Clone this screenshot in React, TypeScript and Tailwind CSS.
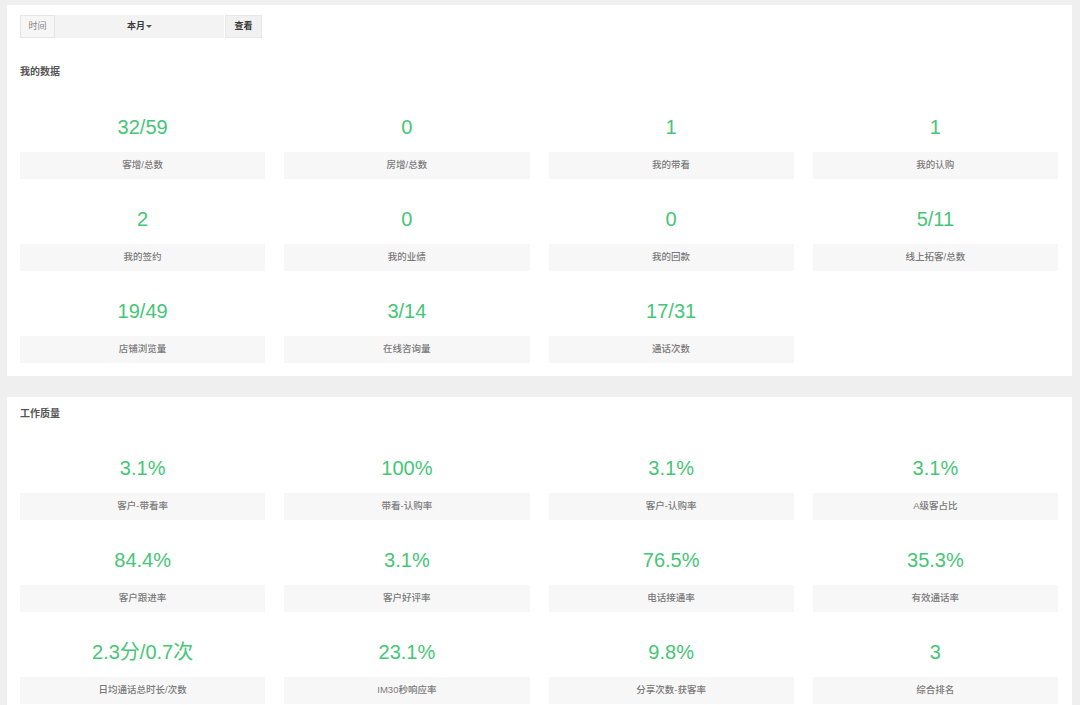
const FONT = 'font-["Liberation_Sans","Noto_Sans_CJK_SC",sans-serif]';

const MY_DATA: [string, string][] = [
  ['32/59', '客增/总数'],
  ['0', '房增/总数'],
  ['1', '我的带看'],
  ['1', '我的认购'],
  ['2', '我的签约'],
  ['0', '我的业绩'],
  ['0', '我的回款'],
  ['5/11', '线上拓客/总数'],
  ['19/49', '店铺浏览量'],
  ['3/14', '在线咨询量'],
  ['17/31', '通话次数'],
];

const QUALITY: [string, string][] = [
  ['3.1%', '客户-带看率'],
  ['100%', '带看-认购率'],
  ['3.1%', '客户-认购率'],
  ['3.1%', 'A级客占比'],
  ['84.4%', '客户跟进率'],
  ['3.1%', '客户好评率'],
  ['76.5%', '电话接通率'],
  ['35.3%', '有效通话率'],
  ['2.3分/0.7次', '日均通话总时长/次数'],
  ['23.1%', 'IM30秒响应率'],
  ['9.8%', '分享次数-获客率'],
  ['3', '综合排名'],
];

function StatGrid({ items, className }: { items: [string, string][]; className: string }) {
  return (
    <div className={`grid grid-cols-4 gap-x-[19px] gap-y-[28px] ${className}`}>
      {items.map(([value, label], i) => (
        <div key={i} className="flex flex-col">
          <div className="text-center text-[20px] leading-[24px] text-[#45c676]">{value}</div>
          <div className="mt-[13px] h-[27px] flex items-center justify-center bg-[#f7f7f7] text-[9.5px] font-medium text-[#7a7a7a]">
            {label}
          </div>
        </div>
      ))}
    </div>
  );
}

export default function App() {
  return (
    <div className={`min-h-screen bg-[#efefef] pt-[5px] pl-[7px] pr-[8px] ${FONT}`}>
      {/* 我的数据 */}
      <div className="bg-white pt-[10px] pl-[13px] pr-[14px] pb-[13px]">
        <div className="flex h-[23px] text-[9px]">
          <div className="w-[35px] flex items-center justify-center bg-[#f6f6f6] border border-[#e6e6e6] text-[#888]">
            时间
          </div>
          <div className="w-[169px] flex items-center justify-center bg-[#f3f3f3] text-[#3a3a3a] font-semibold">
            本月
            <span className="ml-[1px] inline-block w-0 h-0 border-l-[3px] border-r-[3px] border-t-[3px] border-l-transparent border-r-transparent border-t-[#555]" />
          </div>
          <div className="ml-[1px] w-[37px] flex items-center justify-center bg-[#f1f1f1] border border-[#e8e8e8] text-[#3a3a3a] font-semibold">
            查看
          </div>
        </div>
        <div className="mt-[27px] text-[10px] leading-[14px] font-semibold text-[#555]">我的数据</div>
        <StatGrid items={MY_DATA} className="mt-[36px]" />
      </div>

      {/* 工作质量 */}
      <div className="mt-[21px] bg-white pt-[10px] pl-[13px] pr-[14px] pb-[14px]">
        <div className="text-[10px] leading-[14px] font-semibold text-[#555]">工作质量</div>
        <StatGrid items={QUALITY} className="mt-[35px]" />
      </div>
    </div>
  );
}
